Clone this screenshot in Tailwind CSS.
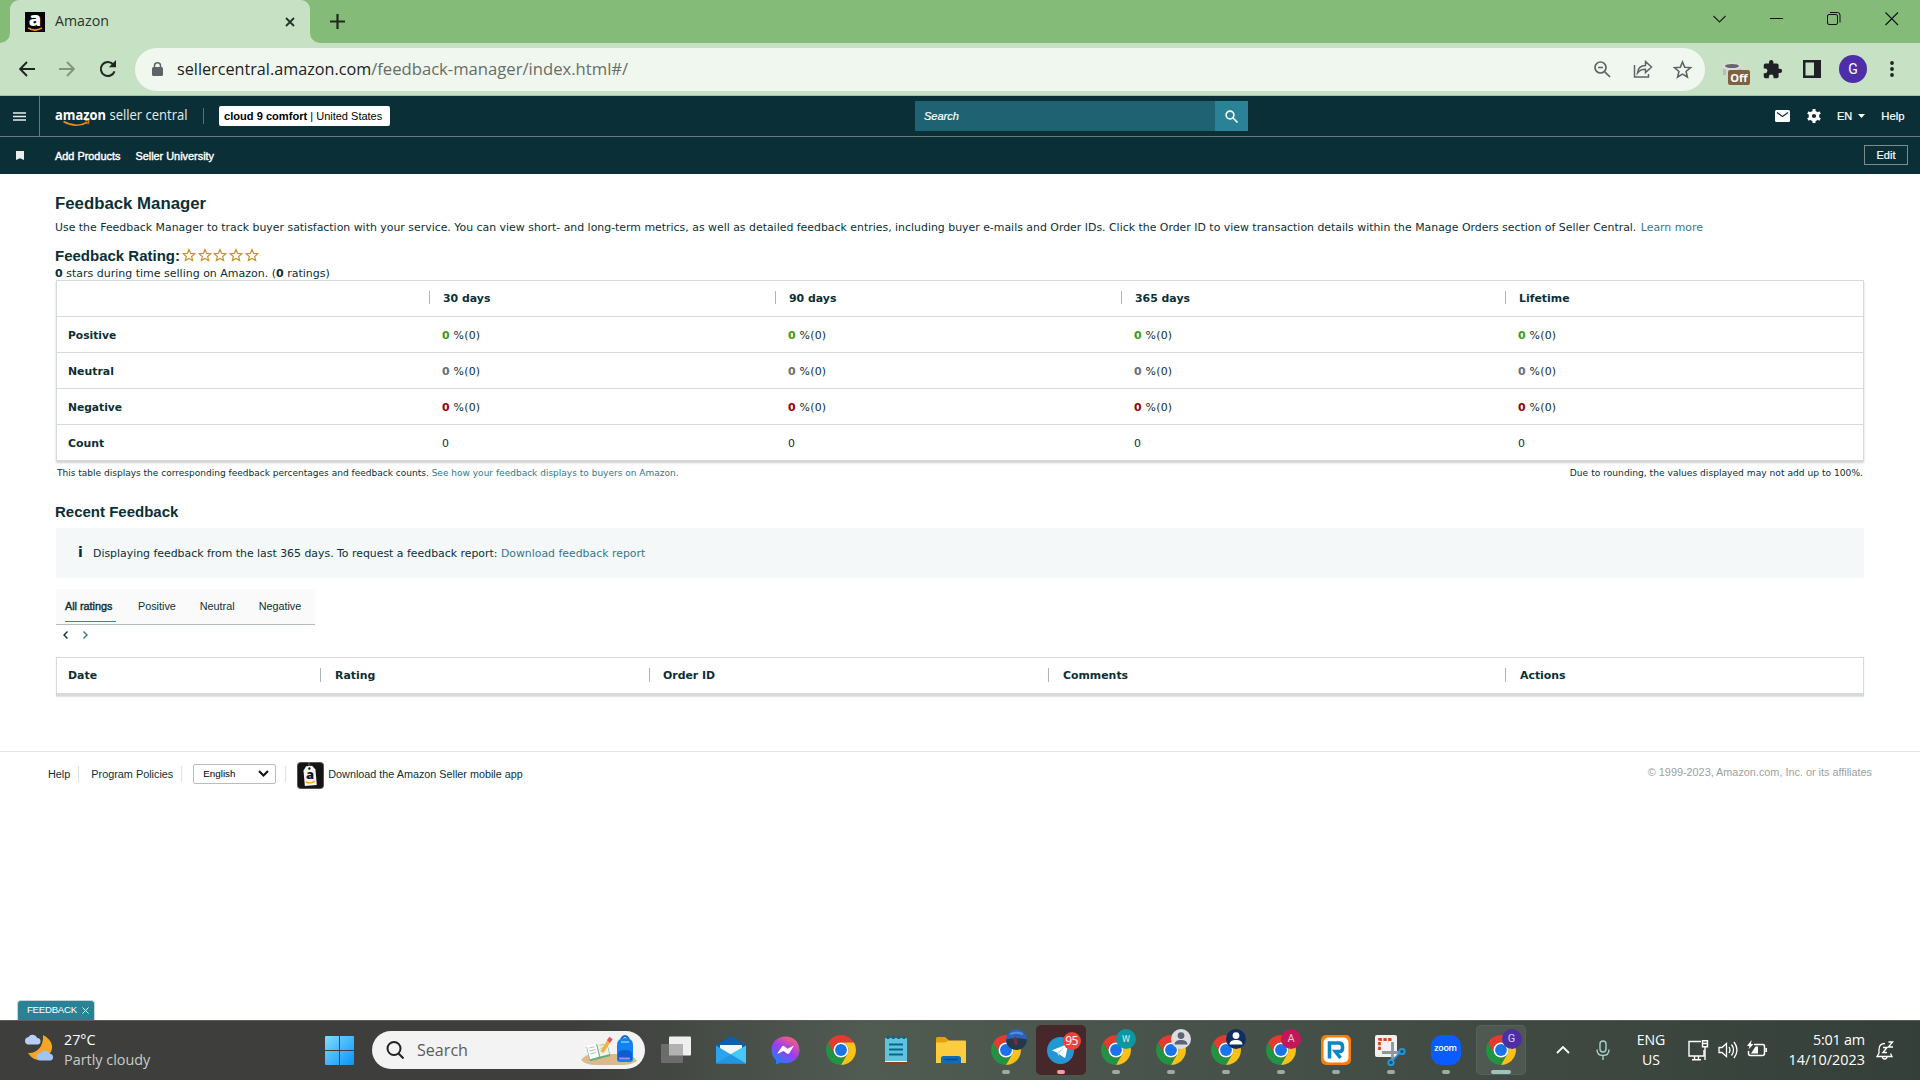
<!DOCTYPE html>
<html lang="en">

<head>
  <meta charset="UTF-8" />
  <meta name="viewport" content="width=device-width, initial-scale=1.0" />
  <title>Amazon</title>
  <script src="https://cdn.jsdelivr.net/npm/@tailwindcss/browser@4"></script>
</head>

<body class="flex flex-col w-[1920px] h-[1080px] overflow-hidden bg-white text-[#0b2f36] font-['Liberation_Sans',Arial,sans-serif]">

  <!-- shared icons -->
  <svg class="hidden">
    <symbol id="chrome" viewBox="2 2 44 44">
      <path fill="#e33b2e" d="M4.95 13A22 22 0 0 1 43.05 13H24A11 11 0 0 0 14.47 29.5Z" />
      <path fill="#229342" d="M4.95 13 14.47 29.5A11 11 0 0 0 33.53 29.5L24 46A22 22 0 0 1 4.95 13Z" />
      <path fill="#fbc116" d="M43.05 13A22 22 0 0 1 24 46L33.53 29.5A11 11 0 0 0 24 13Z" />
      <circle cx="24" cy="24" r="11" fill="#fff" />
      <circle cx="24" cy="24" r="8.7" fill="#1a73e8" />
    </symbol>
    <symbol id="star" viewBox="0 0 24 24">
      <path fill="none" stroke="#c7922b" stroke-width="2" d="M12 2.5 14.8 9.2 22 9.8 16.5 14.5 18.2 21.5 12 17.8 5.8 21.5 7.5 14.5 2 9.8 9.2 9.2Z" />
    </symbol>
    <symbol id="person" viewBox="0 0 20 20">
      <circle cx="10" cy="6.6" r="3.4" />
      <path d="M3.5 15.6c0-3.4 3-4.6 6.5-4.6s6.5 1.2 6.5 4.6z" />
    </symbol>
  </svg>

  <!-- tab strip -->
  <div class="flex h-[43px] bg-[#84bb79] shrink-0">
    <div class="relative flex items-center ml-[10px] w-[300px] rounded-t-[9px] bg-[#c7e1c4] pl-[15px]">
      <svg class="absolute -left-[10px] bottom-0 size-[10px]" viewBox="0 0 10 10"><path fill="#c7e1c4" d="M10 0v10H0A10 10 0 0 0 10 0Z" /></svg>
      <svg class="absolute -right-[10px] bottom-0 size-[10px]" viewBox="0 0 10 10"><path fill="#c7e1c4" d="M0 0v10h10A10 10 0 0 1 0 0Z" /></svg>
      <svg class="size-5 overflow-visible" viewBox="0 0 20 20">
        <rect width="20" height="20" fill="#000" />
        <text x="10" y="14" text-anchor="middle" font-family="Open Sans" font-weight="800" font-size="20" fill="#fff">a</text>
        <path d="M3 15.8q7 4.6 14 0" fill="none" stroke="#f90" stroke-width="1.6" />
      </svg>
      <span class="ml-[10px] pb-[2px] text-[14.2px] text-[#2b332b] font-['Open_Sans',sans-serif]">Amazon</span>
      <svg class="ml-auto mr-[15px] size-[10px]" viewBox="0 0 10 10"><path d="M1 1l8 8M9 1 1 9" stroke="#26302a" stroke-width="1.8" /></svg>
    </div>
    <svg class="ml-5 mt-[14px] size-[15px]" viewBox="0 0 15 15"><path d="M7.5 0v15M0 7.5h15" stroke="#1f2a1f" stroke-width="2.2" /></svg>
    <div class="ml-auto flex items-start pt-3 pr-[21px]">
      <svg class="mr-[44px] mt-[3px] w-[13px] h-2" viewBox="0 0 13 8"><path d="M.5 1l6 6 6-6" fill="none" stroke="#222" stroke-width="1.2" /></svg>
      <svg class="mr-[43px] w-[14px] h-[13px]" viewBox="0 0 14 13"><path d="M0 6.5h13" stroke="#111" /></svg>
      <svg class="mr-[44px] size-[14px]" viewBox="0 0 14 14"><rect x=".5" y="2.5" width="10" height="10" rx="1.5" fill="none" stroke="#111" /><path d="M3 .5h7.5a2.5 2.5 0 0 1 2.5 2.5v7.5" fill="none" stroke="#111" /></svg>
      <svg class="size-[14px]" viewBox="0 0 14 14"><path d="M.5.5l12.5 12.5M13 .5.5 13" stroke="#111" stroke-width="1.1" /></svg>
    </div>
  </div>

  <!-- toolbar -->
  <div class="flex items-center h-[53px] shrink-0 bg-[#c7e1c4] border-b border-[#a9c2a7]">
    <svg class="ml-[19px] size-4" viewBox="0 0 16 16"><path d="M16 8H1.5M8 1 1.2 8 8 15" fill="none" stroke="#202622" stroke-width="1.9" /></svg>
    <svg class="ml-6 size-4" viewBox="0 0 16 16"><path d="M0 8h14.5M8 1l6.8 7L8 15" fill="none" stroke="#84937f" stroke-width="1.9" /></svg>
    <svg class="ml-6 size-[18px]" viewBox="0 0 18 18"><path d="M15.5 11.3A7 7 0 1 1 14 4.2" fill="none" stroke="#202622" stroke-width="2" /><path d="M17 0v7.2H9.8Z" fill="#202622" /></svg>
    <div class="flex items-center ml-[18px] w-[1570px] h-[43px] rounded-full bg-[#f0f7ef] pl-[17px] pr-[13px] font-['Open_Sans',sans-serif] text-[16.2px]">
      <svg class="w-[11px] h-[14px]" viewBox="0 0 11 14"><rect y="5" width="11" height="9" rx="1.5" fill="#5f6368" /><path d="M2.5 5.5V3.8a3 3 0 0 1 6 0v1.7" fill="none" stroke="#5f6368" stroke-width="1.5" /></svg>
      <span class="ml-[14px] text-[#202124]">sellercentral.amazon.com</span><span class="text-[#686d68] text-[16.65px]">/feedback-manager/index.html#/</span>
      <svg class="ml-auto size-[17px]" viewBox="0 0 17 17"><g fill="none" stroke="#5f6368" stroke-width="1.7"><circle cx="6.5" cy="6.5" r="5.5" /><path d="M10.8 10.8 16 16M4 6.5h5" /></g></svg>
      <svg class="ml-[22px] w-[20px] h-[18px]" viewBox="0 0 20 18"><path d="M1.5 5v12h14v-3M4.5 13c.5-5 3.5-7.5 8-7.5V1.5l6 5.5-6 5.5V9.2c-3.5 0-6 1-8 3.8Z" fill="none" stroke="#5f6368" stroke-width="1.5" /></svg>
      <svg class="ml-5 size-[19px]" viewBox="0 0 24 24"><path fill="none" stroke="#5f6368" stroke-width="2" d="M12 2.5 14.8 9.2 22 9.8 16.5 14.5 18.2 21.5 12 17.8 5.8 21.5 7.5 14.5 2 9.8 9.2 9.2Z" /></svg>
    </div>
    <div class="relative ml-[17px] w-7 h-[22px] mt-2">
      <svg class="w-5 h-4" viewBox="0 0 20 16"><path d="M2.500 4v9M17.500 4v8" stroke="#bbb" stroke-width="3" /><ellipse cx="10" cy="4.5" rx="10" ry="4" fill="#dcdcdc" /><ellipse cx="10" cy="4" rx="7" ry="2" fill="#666" /></svg>
      <span class="absolute left-[6px] top-[8px] w-[22px] h-[15px] rounded-[2px] bg-[#80613f] text-center text-[11px] leading-[15px] font-bold text-white font-['Open_Sans',sans-serif]">Off</span>
    </div>
    <svg class="ml-[12px] size-[21px]" viewBox="0 0 24 24"><path fill="#202124" d="M20.5 11H19V7a2 2 0 0 0-2-2h-4V3.5a2.5 2.5 0 0 0-5 0V5H4a2 2 0 0 0-2 2v3.8h1.5a2.7 2.7 0 0 1 0 5.4H2V20a2 2 0 0 0 2 2h3.8v-1.5a2.7 2.7 0 0 1 5.4 0V22H17a2 2 0 0 0 2-2v-4h1.5a2.5 2.5 0 0 0 0-5z" /></svg>
    <svg class="ml-[20px] size-[18px]" viewBox="0 0 18 18"><path fill="#202124" fill-rule="evenodd" d="M0 0h18v18H0zM2.500 2.500v13H11v-13z" /></svg>
    <span class="ml-[18px] size-7 rounded-full bg-[#4d2ea8] text-white text-[14px] leading-7 text-center font-['Roboto',sans-serif]">G</span>
    <svg class="ml-[23px] w-1 h-4" viewBox="0 0 4 16" fill="#202124"><circle cx="2" cy="2" r="1.9" /><circle cx="2" cy="8" r="1.9" /><circle cx="2" cy="14" r="1.9" /></svg>
  </div>

  <!-- seller central header -->
  <header class="shrink-0 bg-[#0b2f36] text-white text-[11px]">
    <div class="flex items-center h-[41px] border-b border-[#6b7a78]">
      <div class="flex items-center w-10 h-full border-r border-[#6b7a78] pl-[13px]">
        <svg class="w-[13px] h-[9px]" viewBox="0 0 13 9"><path d="M0 1h13M0 4.5h13M0 8h13" stroke="#e8eeee" stroke-width="1.5" /></svg>
      </div>
      <svg class="ml-[15px] w-[134px] h-7 overflow-visible" viewBox="0 0 134 28" font-family="Open Sans">
        <text x="0" y="17.5" font-size="14" font-weight="700" fill="#fff" textLength="51" lengthAdjust="spacingAndGlyphs">amazon</text>
        <text x="54.5" y="17.5" font-size="15" fill="#e6ecec" textLength="78" lengthAdjust="spacingAndGlyphs">seller central</text>
        <path d="M8.500 19.500q12.500 7 24 .7" fill="none" stroke="#f08c1a" stroke-width="1.6" />
        <path d="M30 18.800q4-.8 4 .2t-1.300 3.200" fill="none" stroke="#f08c1a" stroke-width="1.1" />
      </svg>
      <span class="ml-[14px] w-px h-4 bg-[#5c7073]"></span>
      <div class="ml-[15px] h-5 w-[171px] rounded-[2px] bg-white text-black leading-[20px] pl-[5px] whitespace-nowrap"><b class="text-[11.1px]">cloud 9 comfort</b> | United States</div>
      <div class="ml-[525px] w-[300px] h-[30px] bg-[#1f6271] pl-[9px] leading-[30px] italic [-webkit-text-stroke:0.2px]">Search</div>
      <div class="flex items-center justify-center w-[33px] h-[30px] bg-[#2b8296]">
        <svg class="size-[13px]" viewBox="0 0 13 13"><g fill="none" stroke="#fff" stroke-width="1.6"><circle cx="5" cy="5" r="3.9" /><path d="M8 8l4.500 4.500" /></g></svg>
      </div>
      <svg class="ml-[527px] w-[15px] h-3" viewBox="0 0 15 12"><rect width="15" height="12" rx="1.5" fill="#fff" /><path d="M2 2.500 7.500 6.500 13 2.500" fill="none" stroke="#0b2f36" stroke-width="1.2" /></svg>
      <svg class="ml-[17px] size-[14px]" viewBox="0 0 14 14"><circle cx="7" cy="7" r="3.7" fill="none" stroke="#fff" stroke-width="3.2" /><path d="M7 0v2.500M7 11.500V14M.9 3.500l2.200 1.200M10.900 9.300l2.200 1.200M.9 10.500l2.200-1.200M10.900 4.700l2.200-1.200" stroke="#fff" stroke-width="3" /></svg>
      <span class="ml-[16px] [-webkit-text-stroke:0.2px]">EN</span>
      <svg class="ml-[6px] w-[7px] h-1" viewBox="0 0 7 4"><path d="M0 0h7L3.500 4Z" fill="#fff" /></svg>
      <span class="ml-[16px] text-[11.3px] [-webkit-text-stroke:0.2px]">Help</span>
    </div>
    <div class="flex items-center h-[37px] pr-3 pt-px [-webkit-text-stroke:0.4px]">
      <svg class="ml-4 mb-[2px] w-[8px] h-[9px]" viewBox="0 0 8 9"><path d="M0 0h8v9L4 7.200 0 9Z" fill="#e8eeee" /></svg>
      <span class="ml-[31px] text-[10.9px]">Add Products</span>
      <span class="ml-[15px] text-[10.9px]">Seller University</span>
      <span class="ml-auto mb-[2px] w-11 h-5 border border-[#7d8b8c] text-center leading-[18px] [-webkit-text-stroke:0.2px]">Edit</span>
    </div>
  </header>

  <!-- page content -->
  <main class="grow pt-[20px] font-['DejaVu_Sans',Verdana,sans-serif] text-[10.92px] leading-[14px]">
    <div class="ml-[56px] w-[1808px]">
      <h1 class="-ml-px h-5 leading-5 text-[16.8px] font-bold font-['Liberation_Sans',Arial,sans-serif]">Feedback Manager</h1>
      <p class="-ml-px mt-1 h-5 leading-5 whitespace-nowrap text-[10.925px]">Use the Feedback Manager to track buyer satisfaction with your service. You can view short- and long-term metrics, as well as detailed feedback entries, including buyer e-mails and Order IDs. Click the Order ID to view transaction details within the Manage Orders section of Seller Central. <a class="ml-px text-[#34788c]">Learn more</a></p>
      <div class="flex items-center -ml-px mt-[8px] h-5">
        <h2 class="text-[15px] leading-5 font-bold font-['Liberation_Sans',Arial,sans-serif]">Feedback Rating:</h2>
        <div class="flex gap-[1.7px] ml-[2px] pb-[3px]">
          <svg class="size-[14px]"><use href="#star" /></svg>
          <svg class="size-[14px]"><use href="#star" /></svg>
          <svg class="size-[14px]"><use href="#star" /></svg>
          <svg class="size-[14px]"><use href="#star" /></svg>
          <svg class="size-[14px]"><use href="#star" /></svg>
        </div>
      </div>
      <p class="-ml-px h-[14px] leading-[15px] text-[11px]"><b>0</b> stars during time selling on Amazon. (<b>0</b> ratings)</p>

      <div class="border border-b-0 border-[#d5dbdb] shadow-[0_2px_2px_rgba(0,0,0,0.18)]">
        <div class="grid grid-cols-[372px_346px_346px_384px_1fr] items-center h-9 pt-px border-b border-[#d5dbdb] font-bold">
          <span></span>
          <span class="flex items-center"><i class="w-px h-[13px] mr-[13px] mb-[3px] bg-[#aab7b8]"></i>30 days</span>
          <span class="flex items-center"><i class="w-px h-[13px] mr-[13px] mb-[3px] bg-[#aab7b8]"></i>90 days</span>
          <span class="flex items-center"><i class="w-px h-[13px] mr-[13px] mb-[3px] bg-[#aab7b8]"></i>365 days</span>
          <span class="flex items-center"><i class="w-px h-[13px] mr-[13px] mb-[3px] bg-[#aab7b8]"></i>Lifetime</span>
        </div>
        <div class="grid grid-cols-[385px_346px_346px_384px_1fr] items-center h-9 pt-[2px] border-b border-[#d5dbdb]">
          <b class="pl-[11px] text-[10.7px]">Positive</b>
          <span class="tracking-[0.25px]"><b class="text-[#3f9a12]">0</b> %(0)</span>
          <span class="tracking-[0.25px]"><b class="text-[#3f9a12]">0</b> %(0)</span>
          <span class="tracking-[0.25px]"><b class="text-[#3f9a12]">0</b> %(0)</span>
          <span class="tracking-[0.25px]"><b class="text-[#3f9a12]">0</b> %(0)</span>
        </div>
        <div class="grid grid-cols-[385px_346px_346px_384px_1fr] items-center h-9 pt-[2px] border-b border-[#d5dbdb]">
          <b class="pl-[11px] text-[10.9px]">Neutral</b>
          <span class="tracking-[0.25px]"><b class="text-[#6b7075]">0</b> %(0)</span>
          <span class="tracking-[0.25px]"><b class="text-[#6b7075]">0</b> %(0)</span>
          <span class="tracking-[0.25px]"><b class="text-[#6b7075]">0</b> %(0)</span>
          <span class="tracking-[0.25px]"><b class="text-[#6b7075]">0</b> %(0)</span>
        </div>
        <div class="grid grid-cols-[385px_346px_346px_384px_1fr] items-center h-9 pt-[2px] border-b border-[#d5dbdb]">
          <b class="pl-[11px] text-[10.7px]">Negative</b>
          <span class="tracking-[0.25px]"><b class="text-[#990000]">0</b> %(0)</span>
          <span class="tracking-[0.25px]"><b class="text-[#990000]">0</b> %(0)</span>
          <span class="tracking-[0.25px]"><b class="text-[#990000]">0</b> %(0)</span>
          <span class="tracking-[0.25px]"><b class="text-[#990000]">0</b> %(0)</span>
        </div>
        <div class="grid grid-cols-[385px_346px_346px_384px_1fr] items-center h-9 pt-[2px] border-b border-[#d5dbdb]">
          <b class="pl-[11px] text-[10.9px]">Count</b>
          <span>0</span>
          <span>0</span>
          <span>0</span>
          <span>0</span>
        </div>
      </div>

      <div class="flex justify-between mt-[5px] h-[14px] px-px text-[9.02px] whitespace-nowrap">
        <p>This table displays the corresponding feedback percentages and feedback counts. <a class="text-[#34788c]">See how your feedback displays to buyers on Amazon.</a></p>
        <p class="text-[9.13px]">Due to rounding, the values displayed may not add up to 100%.</p>
      </div>

      <h2 class="-ml-px mt-[22px] h-5 text-[15px] leading-5 font-bold font-['Liberation_Sans',Arial,sans-serif]">Recent Feedback</h2>

      <div class="flex items-center mt-[6px] h-[50px] pl-[22px] bg-[#f4f8f9]">
        <b class="w-[15px] text-[14px] pb-[2px]">i</b>
        <p class="pt-px whitespace-nowrap text-[10.9px]">Displaying feedback from the last 365 days. To request a feedback report: <a class="text-[#34788c]">Download feedback report</a></p>
      </div>

      <div class="flex mt-[11px] w-[259px] h-9 pl-[10px] bg-[#fafafa] border-b border-[#b5bbbb] font-['Liberation_Sans',Arial,sans-serif] text-[10.8px] leading-[34px]">
        <span class="w-[51px] h-[33px] -ml-px mr-px border-b border-[#2b8ca0] [-webkit-text-stroke:0.4px]">All ratings</span>
        <span class="ml-[21px]">Positive</span>
        <span class="ml-[24px]">Neutral</span>
        <span class="ml-[24px]">Negative</span>
      </div>
      <div class="flex mt-[6px] pl-[7px] gap-[15px] h-2">
        <svg class="w-[5px] h-2" viewBox="0 0 5 8"><path d="M4.500.5 1 4l3.500 3.500" fill="none" stroke="#0b2f36" stroke-width="1.4" /></svg>
        <svg class="w-[5px] h-2" viewBox="0 0 5 8"><path d="M.5.5 4 4 .5 7.500" fill="none" stroke="#34788c" stroke-width="1.4" /></svg>
      </div>

      <div class="mt-[18px] border border-b-[3px] border-[#d5dbdb] shadow-[0_1px_1px_rgba(0,0,0,0.1)]">
        <div class="grid grid-cols-[263px_329px_399px_457px_1fr] items-center h-[35px] pt-px font-bold">
          <span class="pl-[11px]">Date</span>
          <span class="flex items-center"><i class="w-px h-[14px] mr-[14px] mb-[2px] bg-[#aab7b8]"></i>Rating</span>
          <span class="flex items-center"><i class="w-px h-[14px] mr-[13px] mb-[2px] bg-[#aab7b8]"></i>Order ID</span>
          <span class="flex items-center"><i class="w-px h-[14px] mr-[14px] mb-[2px] bg-[#aab7b8]"></i>Comments</span>
          <span class="flex items-center"><i class="w-px h-[14px] mr-[14px] mb-[2px] bg-[#aab7b8]"></i>Actions</span>
        </div>
      </div>
    </div>

    <footer class="flex items-center mt-[55px] h-[44px] border-t border-[#e3e6e6] pl-12 pr-12 font-['Liberation_Sans',Arial,sans-serif] text-[10.85px] whitespace-nowrap">
      <span>Help</span>
      <span class="ml-2 w-px h-4 bg-[#dde1e1]"></span>
      <span class="ml-[12px]">Program Policies</span>
      <span class="ml-2 w-px h-4 bg-[#dde1e1]"></span>
      <div class="flex items-center justify-between ml-[11px] w-[83px] h-5 border border-[#b8bebe] rounded-[2px] pl-[9px] pr-[6px] text-[9.8px] text-black">
        English
        <svg class="w-[11px] h-[7px]" viewBox="0 0 11 7"><path d="M1 1l4.500 4.500L10 1" fill="none" stroke="#111" stroke-width="2" /></svg>
      </div>
      <span class="ml-[9px] w-px h-4 bg-[#dde1e1]"></span>
      <svg class="ml-[11px] mt-[3px] size-[27px]" viewBox="0 0 27 27">
        <rect x=".5" y=".5" width="26" height="26" rx="3" fill="#141414" stroke="#555" />
        <path d="M12 0v5" stroke="#777" />
        <g transform="rotate(-5 13 14)"><path d="M7 8l3-4h6l3 4v15.500H7Z" fill="#f4f4f4" /><circle cx="13" cy="6.5" r="1.2" fill="#141414" /><path d="M8.500 19.500q4.500 3 9 0" fill="none" stroke="#f90" stroke-width="1.2" /></g>
        <text x="13" y="17" text-anchor="middle" font-family="Open Sans" font-weight="800" font-size="13" fill="#141414">a</text>
      </svg>
      <span class="ml-1 text-[10.8px]">Download the Amazon Seller mobile app</span>
      <span class="ml-auto pb-1 text-[#9b9fa0]">© 1999-2023, Amazon.com, Inc. or its affiliates</span>
    </footer>
  </main>

  <div class="ml-[17px] flex items-center justify-between shrink-0 w-[78px] h-5 pl-[9px] pr-[5px] rounded-t-[4px] bg-[#2b8296] border border-b-0 border-[#c8d4d6] text-white text-[9.7px] tracking-[-0.3px]">
    FEEDBACK
    <svg class="size-[7px]" viewBox="0 0 7 7"><path d="M.5.5l6 6M6.500.5l-6 6" stroke="#fff" /></svg>
  </div>

  <!-- taskbar -->
  <div class="flex items-center h-[60px] pb-px shrink-0 border-t border-[#5a5e5a] bg-linear-to-r from-[#3e3f3c] from-30% via-[#505b52] via-45% to-[#353f39] to-100% font-['Open_Sans',sans-serif] text-[14.3px] text-white">
    <svg class="ml-6 mb-1 w-8 h-[30px]" viewBox="0 0 32 30">
      <path d="M19 2c10 5 12 14 5 21-6 6-15 5-20-3 8 1 16-6 15-18Z" fill="#f4a623" />
      <path d="M4 11.500a3.700 3.700 0 0 1 .3-7.300 5 5 0 0 1 9 .8 3.300 3.300 0 0 1 .7 6.500Z" fill="#b9d0f6" />
      <path d="M16 27.500a3.600 3.600 0 0 1 .2-7.200 5.300 5.300 0 0 1 9.500.5 3.400 3.400 0 0 1 .8 6.700Z" fill="#a3c3f3" />
    </svg>
    <div class="ml-2 w-[261px] leading-[20px]">
      <p>27°C</p>
      <p class="text-[#c9ccc9] text-[14.4px]">Partly cloudy</p>
    </div>
    <svg class="size-[29px]" viewBox="0 0 29 29">
      <defs><linearGradient id="win" x1="0" y1="0" x2="1" y2="1"><stop offset="0" stop-color="#7fdcff" /><stop offset="1" stop-color="#0a93f5" /></linearGradient></defs>
      <path d="M1 0h13v14H0V1a1 1 0 0 1 1-1ZM15 0h13a1 1 0 0 1 1 1v13H15ZM0 15h14v14H1a1 1 0 0 1-1-1ZM15 15h14v13a1 1 0 0 1-1 1H15Z" fill="url(#win)" />
    </svg>
    <div class="flex items-center ml-[18px] w-[273px] h-[38px] rounded-full bg-[#f3f3f3] pl-[14px] text-[16.1px] text-[#5c5c5c]">
      <svg class="size-[18px]" viewBox="0 0 18 18"><g fill="none" stroke="#222" stroke-width="2"><circle cx="8" cy="7.5" r="6.5" /><path d="M12.500 12.500l5 5" /></g></svg>
      <span class="ml-[13px]">Search</span>
      <svg class="ml-auto mr-[7px] w-[58px] h-8" viewBox="0 0 58 32">
        <path d="M1 26q4-6 14-6h28q11 1 14 7-6 4-14 4H16Q6 31 1 26Z" fill="#dcb98c" />
        <g transform="rotate(-14 18 18)"><rect x="8" y="10" width="21" height="15" rx="1" fill="#5fae7b" /><rect x="8.5" y="9" width="9.5" height="14" fill="#fff" /><rect x="19" y="9" width="9.5" height="14" fill="#f2f2ea" /><path d="M10 12h6M10 15h6M10 18h6M21 12h5M21 15h5M21 18h5" stroke="#a9c4b0" /></g>
        <path d="M22 18 29 7" stroke="#f4b13e" stroke-width="3.5" /><path d="M28.500 7.500 31 4" stroke="#e8505b" stroke-width="4" />
        <path d="M41 5q4-6 8 0" fill="none" stroke="#1266c8" stroke-width="2" />
        <path d="M37 11q0-7 8-7t8 7v14q0 3-3 3H40q-3 0-3-3Z" fill="#1481f0" />
        <path d="M38 20q0-4 7-4t7 4v6H38Z" fill="#0b5ed2" /><path d="M39 24.500h11" stroke="#a58cf0" stroke-width="2" /><path d="M41 8h8" stroke="#5fc0ff" stroke-width="2" />
      </svg>
    </div>

    <!-- pinned apps -->
    <div class="flex ml-[3px] h-[50px]">
      <div class="flex items-center justify-center w-[55px]">
        <svg class="size-[30px]" viewBox="0 0 30 30"><rect x="8" y="1.5" width="22" height="19" rx="1" fill="#efefef" /><rect x="0" y="9" width="22" height="19" rx="1" fill="#6c6c6c" /><rect x="8" y="9" width="14" height="11.5" fill="#b2b2b2" /></svg>
      </div>
      <div class="flex items-center justify-center w-[55px]">
        <svg class="size-[30px]" viewBox="0 0 30 30"><path d="M0 10 15 1l15 9v3H0Z" fill="#0b5fae" /><path d="M4 10h22v9H4Z" fill="#f4f4f4" /><path d="M0 10.500 30 28.500H1a1 1 0 0 1-1-1Z" fill="#28a5ec" /><path d="M30 10.500V27.500a1 1 0 0 1-1 1L14 19.500Z" fill="#45c8f5" /><path d="M0 28.500 15 19.500 30 28.500Z" fill="#2196e3" /></svg>
      </div>
      <div class="flex items-center justify-center w-[55px]">
        <svg class="size-[29px]" viewBox="0 0 29 29">
          <defs><linearGradient id="msg" x1=".2" y1="1" x2=".8" y2="0"><stop offset="0" stop-color="#0a8cff" /><stop offset=".5" stop-color="#9b3cf5" /><stop offset="1" stop-color="#ff6170" /></linearGradient></defs>
          <path d="M14.500.5C6.500.5.500 6.200.500 14c0 4 1.600 7.500 4.500 10v4.500l4.500-1.900c1.600.5 3.200.7 5 .7 8 0 14-5.600 14-13.300S22.500.5 14.500.5Z" fill="url(#msg)" />
          <path d="M6 18 11 10.500q1-1.300 2.300-.3l3.200 2.500L23 9.500 18.300 17.200q-1 1.300-2.300.3L12.600 15Z" fill="#fff" />
        </svg>
      </div>
      <div class="flex items-center justify-center w-[55px]"><svg class="size-[30px]"><use href="#chrome" /></svg></div>
      <div class="flex items-center justify-center w-[55px]">
        <svg class="w-[22px] h-[30px]" viewBox="0 0 22 30"><rect y="25" width="22" height="4.5" rx="1" fill="#8a4514" /><rect y="22" width="22" height="5" fill="#f4f4f4" /><path d="M0 3h22v23H0Z" fill="#5cc4de" /><path d="M4 9.500h14M4 14.500h14M4 19.500h14" stroke="#0e6488" stroke-width="1.8" /><path d="M3 1v3M8.300 1v3M13.700 1v3M19 1v3" stroke="#0e6488" stroke-width="2.6" /></svg>
      </div>
      <div class="flex items-center justify-center w-[55px]">
        <svg class="size-[30px]" viewBox="0 0 30 30"><path d="M0 3.500a1.500 1.500 0 0 1 1.500-1.500H9l4 3.500V10H0Z" fill="#e3a008" /><path d="M0 7.500h9l3.500-2H29a1 1 0 0 1 1 1V28H0Z" fill="#fdcb3e" /><path d="M5 28.500v-5a2.500 2.500 0 0 1 2.500-2.500h15a2.500 2.500 0 0 1 2.500 2.500v5Z" fill="#0f6cbd" /><path d="M8.500 24.500h13" stroke="#0a4a86" stroke-width="1.5" /></svg>
      </div>

      <div class="relative flex items-center justify-center w-[55px]">
        <svg class="size-[30px]"><use href="#chrome" /></svg>
        <svg class="absolute left-[28px] top-[4px] size-[21px]" viewBox="0 0 20 20"><circle cx="10" cy="10" r="10" fill="#2c62b8" /><path d="M0 10q10-3 20 0a10 10 0 0 1-20 0Z" fill="#24384a" /><path d="M4 5q6-3 12 0" stroke="#4f8fe0" stroke-width="2" fill="none" /><path d="M7 10l2-3 2 3v5H8Z" fill="#742c43" /></svg>
        <i class="absolute bottom-[1px] w-2 h-1 rounded-full bg-[#a4a8a4]"></i>
      </div>
      <div class="flex justify-center w-[55px]">
        <div class="relative flex items-center justify-center w-[50px] rounded-[5px] bg-[#46272a]">
          <svg class="size-[27px]" viewBox="0 0 27 27"><circle cx="13.5" cy="13.5" r="13.5" fill="#2397d4" /><path d="M5 13.300 20 7.200q1.200-.4 1 1L18.500 20q-.3 1.300-1.500.6L9.800 15.500Z" fill="#fff" /><path d="M10 15.500 18 9.500l-6 7v3Z" fill="#b9d8ea" /></svg>
          <span class="absolute left-[27px] top-[7px] size-[18px] rounded-full bg-[#f2403c] text-[12px] leading-[18px] text-center tracking-[-0.5px]">95</span>
          <i class="absolute bottom-[1px] w-2 h-1 rounded-full bg-[#ff9aa2]"></i>
        </div>
      </div>
      <div class="relative flex items-center justify-center w-[55px]">
        <svg class="size-[30px]"><use href="#chrome" /></svg>
        <span class="absolute left-[28px] top-[4px] size-5 rounded-full bg-[#0b98a3] text-[9px] leading-5 text-center text-[#d5f3f5] font-['Roboto',sans-serif]">W</span>
        <i class="absolute bottom-[1px] w-2 h-1 rounded-full bg-[#a4a8a4]"></i>
      </div>
      <div class="relative flex items-center justify-center w-[55px]">
        <svg class="size-[30px]"><use href="#chrome" /></svg>
        <span class="absolute left-[28px] top-[4px] size-5 rounded-full bg-[#dcdde2]"><svg class="size-5 fill-[#5c6373]"><use href="#person" /></svg></span>
        <i class="absolute bottom-[1px] w-2 h-1 rounded-full bg-[#a4a8a4]"></i>
      </div>
      <div class="relative flex items-center justify-center w-[55px]">
        <svg class="size-[30px]"><use href="#chrome" /></svg>
        <span class="absolute left-[28px] top-[4px] size-5 rounded-full bg-[#0f2f63]"><svg class="size-5 fill-white"><use href="#person" /></svg></span>
        <i class="absolute bottom-[1px] w-2 h-1 rounded-full bg-[#a4a8a4]"></i>
      </div>
      <div class="relative flex items-center justify-center w-[55px]">
        <svg class="size-[30px]"><use href="#chrome" /></svg>
        <span class="absolute left-[28px] top-[4px] size-5 rounded-full bg-[#c2185b] text-[11px] leading-5 text-center text-[#f3c6d8] font-['Roboto',sans-serif]">A</span>
        <i class="absolute bottom-[1px] w-2 h-1 rounded-full bg-[#a4a8a4]"></i>
      </div>
      <div class="relative flex items-center justify-center w-[55px]">
        <svg class="size-[30px]" viewBox="0 0 30 30"><rect width="30" height="30" rx="5" fill="#ff7a00" /><rect x="2.5" y="2.5" width="25" height="25" rx="5" fill="#fff" /><path d="M8.500 23.500V8H18q3.500 0 3.500 3.500v2q0 2.500-2.500 3h-4.500l5 6.500" fill="none" stroke="#0a86c2" stroke-width="3.6" /></svg>
        <i class="absolute bottom-[1px] w-2 h-1 rounded-full bg-[#a4a8a4]"></i>
      </div>
      <div class="relative flex items-center justify-center w-[55px]">
        <svg class="size-[31px]" viewBox="0 0 31 31"><rect x="0" y="0" width="22" height="22" rx="2" fill="#f1f1f1" /><path d="M4.500 15V4.500H17" fill="none" stroke="#d4481c" stroke-width="2.8" stroke-dasharray="3.3 1.5" /><path d="M17.500 7v18M7 17.500h18" stroke="#8f979d" stroke-width="2.8" /><circle cx="27" cy="16.5" r="2.7" fill="none" stroke="#1c9bea" stroke-width="1.8" /><circle cx="16" cy="27.5" r="2.7" fill="none" stroke="#1c9bea" stroke-width="1.8" /><path d="M18 25l6-6.500" stroke="#1c9bea" stroke-width="1.8" /></svg>
        <i class="absolute bottom-[1px] w-2 h-1 rounded-full bg-[#a4a8a4]"></i>
      </div>
      <div class="relative flex items-center justify-center w-[55px]">
        <span class="size-[30px] rounded-[11px] bg-[#0b5cff] text-[8.8px] leading-[27px] text-center font-semibold tracking-[-0.2px]">zoom</span>
        <i class="absolute bottom-[1px] w-2 h-1 rounded-full bg-[#a4a8a4]"></i>
      </div>
      <div class="flex justify-center w-[55px]">
        <div class="relative flex items-center justify-center w-[50px] rounded-[5px] bg-white/8 border border-white/6">
          <svg class="size-[30px]"><use href="#chrome" /></svg>
          <span class="absolute left-[25px] top-[3px] size-5 rounded-full bg-[#4d2ea8] text-[11px] leading-5 text-center text-[#d9cff5] font-['Roboto',sans-serif]">G</span>
          <i class="absolute bottom-0 w-5 h-1 rounded-full bg-[#9cc4bd]"></i>
        </div>
      </div>
    </div>

    <!-- tray -->
    <svg class="ml-[28px] w-[14px] h-2" viewBox="0 0 14 8"><path d="M1 7l6-6 6 6" fill="none" stroke="#fff" stroke-width="1.8" /></svg>
    <svg class="ml-[26px] w-[14px] h-5" viewBox="0 0 14 20"><rect x="4" y="1" width="6" height="11" rx="3" fill="none" stroke="#a9cfc9" stroke-width="1.4" /><path d="M1 9.500q0 6 6 6t6-6M7 15.500V20" fill="none" stroke="#a9cfc9" stroke-width="1.4" /></svg>
    <div class="ml-[26px] w-[30px] leading-[20px] text-center text-[14.1px]">
      <p>ENG</p>
      <p>US</p>
    </div>
    <svg class="ml-[22px] size-[21px]" viewBox="0 0 21 21"><path d="M13 1.500H1v14.500h15V10M4 19.700h9M6.500 16v3.500M10.500 16v3.500" fill="none" stroke="#fff" stroke-width="1.4" /><path d="M14.500.7h5v6h-5ZM17 6.700V20M14.500 3.500h5" fill="none" stroke="#fff" stroke-width="1.4" /></svg>
    <svg class="ml-[9px] w-5 h-[18px]" viewBox="0 0 20 18"><path d="M1 6.500h3l4.500-4v13L4 11.500H1ZM11 6q2 3 0 6M13.500 3.500q4 5.500 0 11M16 1q6 8 0 16" fill="none" stroke="#fff" stroke-width="1.3" /></svg>
    <svg class="ml-[9px] mb-[3px] w-[21px] h-[17px]" viewBox="0 0 21 17"><path d="M7 4.500h8.500q2 0 2 2v7q0 2-2 2H3.500q-2 0-2-2V11M19.300 8v4" fill="none" stroke="#fff" stroke-width="1.5" /><path d="M4 13.500 8.500 6.500H11v7ZM4.500 0 0 6h2.500L1.500 9.500 6.500 4H4Z" fill="#fff" /></svg>
    <div class="ml-auto w-[90px] text-right leading-[20px] text-[14.4px]">
      <p class="tracking-[-0.2px]">5:01 am</p>
      <p>14/10/2023</p>
    </div>
    <svg class="ml-[11px] mr-[26px] w-[18px] h-[19px]" viewBox="0 0 18 19"><path d="M9 2.500q-6 0-6 6v3.500l-2 3.500h15l-1.500-3M6.500 15.500q0 2.500 2.200 2.500t2.300-2.500" fill="none" stroke="#fff" stroke-width="1.3" /><path d="M7 6.500h4l-4 5h4M12.500 1h4l-4 5h4.500" fill="none" stroke="#fff" stroke-width="1.4" /></svg>
  </div>

</body>

</html>
